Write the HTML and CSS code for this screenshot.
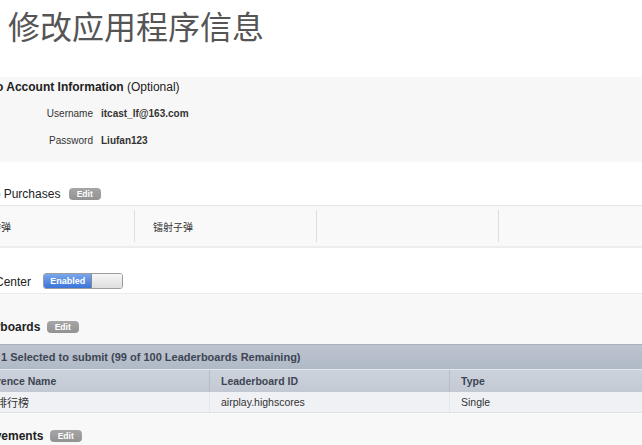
FILE: index.html
```html
<!DOCTYPE html>
<html lang="zh-CN">
<head>
<meta charset="utf-8">
<title>修改应用程序信息</title>
<link rel="stylesheet" href="styles.css">
</head>
<body>
<h1 class="title">修改应用程序信息</h1>
<div class="frame">
  <section class="account">
    <div class="heading"><b>Demo Account Information</b> (Optional)</div>
    <div class="field"><span class="label">Username</span><span class="value">itcast_lf@163.com</span></div>
    <div class="field field-2"><span class="label">Password</span><span class="value">Liufan123</span></div>
  </section>

  <section class="block">
    <div class="heading">In-App Purchases <span class="edit">Edit</span></div>
    <div class="iap-row">
      <div class="iap-cell">普通炸弹</div>
      <div class="iap-cell">镭射子弹</div>
      <div class="iap-cell"></div>
      <div class="iap-cell"></div>
    </div>
  </section>

  <section class="block gc">
    <div class="heading">Game Center <span class="switch"><span class="on">Enabled</span><span class="off"></span></span></div>
  </section>

  <section class="gray">
    <div class="heading bold lbh">Leaderboards <span class="edit">Edit</span></div>
    <div class="lb">
      <div class="lb-bar">1 Selected to submit (99 of 100 Leaderboards Remaining)</div>
      <div class="lb-row lb-head">
        <div class="c1">Reference Name</div>
        <div class="c2">Leaderboard ID</div>
        <div class="c3">Type</div>
      </div>
      <div class="lb-row lb-data">
        <div class="c1">飞机排行榜</div>
        <div class="c2">airplay.highscores</div>
        <div class="c3">Single</div>
      </div>
    </div>
    <div class="heading bold ach">Achievements <span class="edit">Edit</span></div>
  </section>
</div>
</body>
</html>
```

FILE: styles.css
```css
html, body {
  margin: 0;
  padding: 0;
  background: #ffffff;
  overflow: hidden;
}
body {
  width: 642px;
  height: 445px;
  font-family: "Liberation Sans", Arial, "Noto Sans CJK SC", sans-serif;
  color: #333;
}
.title {
  margin: 9px 0 0 8px;
  font-family: "Noto Sans CJK SC", sans-serif;
  font-weight: 400;
  font-size: 32px;
  line-height: 32px;
  color: #555;
}
.frame {
  margin-left: -47px;
  width: 740px;
  margin-top: 36px;
}
.heading {
  padding-left: 12px;
  font-size: 12px;
  line-height: 16px;
  height: 16px;
  white-space: nowrap;
  color: #222;
}
.heading.bold { font-weight: bold; }
.account {
  background: #f7f7f7;
  padding: 2px 0 14px;
  height: 69px;
}
.account .heading { padding-left: 17px; }
.field {
  display: flex;
  font-size: 10px;
  line-height: 16px;
  margin-top: 11px;
  gap: 8px;
}
.field-2 { margin-top: 11px; }
.label {
  width: 140px;
  text-align: right;
  color: #333;
}
.value { font-weight: bold; color: #333; }
.edit {
  display: inline-block;
  vertical-align: top;
  margin-top: 2px;
  width: 32px;
  height: 12px;
  margin-left: 5px;
  border-radius: 4px;
  background: linear-gradient(#a6a6a6, #929292);
  color: #fff;
  font-size: 8.5px;
  font-weight: bold;
  line-height: 12px;
  text-align: center;
}
.block { padding-top: 24px; }
.iap-row {
  margin-top: 3px;
  display: flex;
  height: 40px;
  background: #f9f9f9;
  border-top: 1px solid #e6e6e6;
  border-bottom: 2px solid #ededed;
}
.iap-cell {
  width: 163px;
  padding-left: 18px;
  margin: 4px 0;
  border-right: 1px solid #dedede;
  font-size: 10px;
  line-height: 34px;
  color: #333;
  font-family: "Noto Sans CJK SC", sans-serif;
}
.gc { padding-top: 26px; height: 19px; }
.gc .heading { padding-left: 6px; }
.switch {
  display: inline-flex;
  vertical-align: top;
  margin-top: -1px;
  margin-left: 9px;
  width: 78px;
  height: 14px;
  border: 1px solid #9c9c9c;
  border-radius: 3px;
  overflow: hidden;
}
.on {
  width: 47px;
  background: linear-gradient(#7aa6ec, #3b74d8);
  color: #fff;
  font-size: 9px;
  font-weight: bold;
  line-height: 14px;
  text-align: center;
  border-right: 1px solid #8a8a8a;
}
.off {
  flex: 1;
  background: linear-gradient(#f6f6f6, #dedede);
}
.gray {
  border-top: 1px solid #ececec;
  background: #f8f8f8;
  padding-top: 25px;
  height: 200px;
}
.lbh { padding-left: 8px; }
.lbh .edit { margin-left: 3px; }
.lb { margin-top: 9px; }
.lb-bar {
  height: 25px;
  line-height: 25px;
  padding-left: 48px;
  font-size: 11px;
  font-weight: bold;
  color: #3e4552;
  background: linear-gradient(#bcc4d0, #b0b9c6);
  border-top: 1px solid #a9b1be;
  box-sizing: border-box;
}
.lb-row {
  display: flex;
  font-size: 10.5px;
}
.lb-head {
  height: 23px;
  line-height: 22px;
  font-weight: bold;
  color: #3e4552;
  background: linear-gradient(#cdd3dc, #c2c9d3);
  border-top: 1px solid #e4e8ee;
  box-sizing: border-box;
}
.lb-data {
  height: 21px;
  line-height: 20px;
  color: #333;
  background: #eff1f4;
  border-bottom: 1px solid #dde0e5;
  box-sizing: border-box;
}
.lb-row > div { box-sizing: border-box; }
.c1 { width: 257px; padding-left: 21px; border-right: 1px solid #b6bdc8; }
.c2 { width: 240px; padding-left: 11px; border-right: 1px solid #b6bdc8; }
.c3 { flex: 1; padding-left: 11px; }
.lb-data .c1, .lb-data .c2 { border-right-color: #e2e5ea; }
.lb-data .c1 { font-family: "Noto Sans CJK SC", sans-serif; font-size: 11px; }
.ach { margin-top: 15px; padding-left: 9px; }
.ach .edit { margin-left: 3px; }
```
